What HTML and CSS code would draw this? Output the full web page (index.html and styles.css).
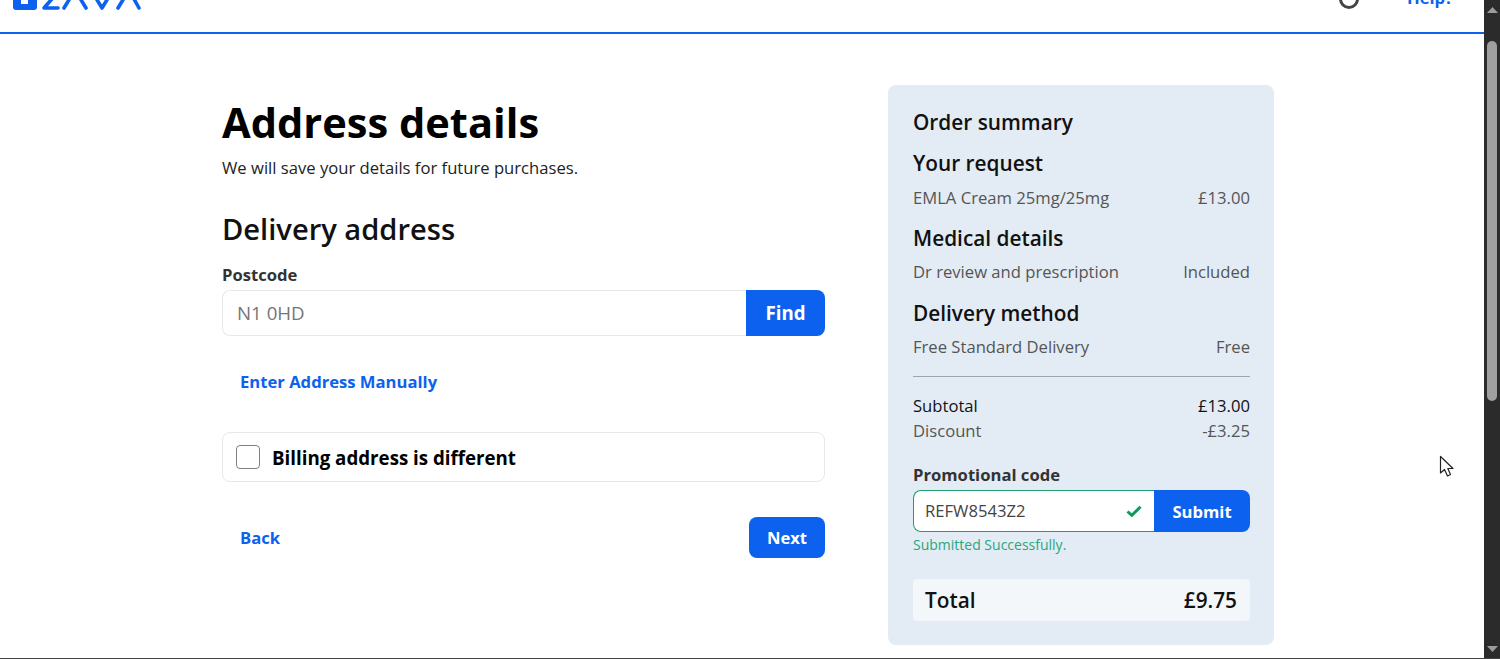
FILE: index.html
```html
<!DOCTYPE html>
<html lang="en">
<head>
<meta charset="utf-8">
<title>Address details</title>
<link rel="stylesheet" href="styles.css">
</head>
<body>
<div class="window">
  <div class="page">
    <header class="topbar">
      <svg class="logo" width="128" height="10" viewBox="0 0 128 10" aria-label="Zava">
        <path d="M0 -8H24V7Q24 10 21 10H3Q0 10 0 7Z" class="logo-fill"/>
        <rect x="8" y="-8" width="7" height="12" class="logo-gap"/>
        <path d="M45 8H31L45 -8M51 8L62 -10L73 8M78 -10L89 8L100 -10M105 8L116 -10L126 8" class="logo-stroke"/>
      </svg>
      <div class="topbar-right">
        <svg class="user" width="24" height="9" viewBox="0 0 24 9"><circle cx="12" cy="-1" r="8.5" class="user-ring"/></svg>
        <a class="help">Help?</a>
      </div>
    </header>
    <main class="content">
      <section class="form">
        <h1>Address details</h1>
        <p class="lead">We will save your details for future purchases.</p>
        <h2>Delivery address</h2>
        <label class="field-label">Postcode</label>
        <div class="postcode">
          <div class="postcode-input">N1 0HD</div>
          <button class="btn btn-find">Find</button>
        </div>
        <a class="link link-manual">Enter Address Manually</a>
        <div class="billing">
          <span class="checkbox"></span>
          <span>Billing address is different</span>
        </div>
        <div class="actions">
          <a class="link">Back</a>
          <button class="btn btn-next">Next</button>
        </div>
      </section>
      <aside class="summary">
        <div class="summary-title">Order summary</div>
        <div class="group-title">Your request</div>
        <div class="row"><span>EMLA Cream 25mg/25mg</span><span>£13.00</span></div>
        <div class="group-title">Medical details</div>
        <div class="row"><span>Dr review and prescription</span><span>Included</span></div>
        <div class="group-title">Delivery method</div>
        <div class="row"><span>Free Standard Delivery</span><span>Free</span></div>
        <hr class="rule">
        <div class="row row-sub dark"><span>Subtotal</span><span>£13.00</span></div>
        <div class="row row-sub"><span>Discount</span><span>-£3.25</span></div>
        <label class="promo-label">Promotional code</label>
        <div class="promo">
          <div class="promo-input">
            <span>REFW8543Z2</span>
            <svg width="16" height="12" viewBox="0 0 16 12"><path d="M1.5 6.5L5.8 10.3L14.5 1.8" class="tick"/></svg>
          </div>
          <button class="btn btn-submit">Submit</button>
        </div>
        <div class="promo-ok">Submitted Successfully.</div>
        <div class="total"><span>Total</span><span>£9.75</span></div>
      </aside>
    </main>
  </div>
  <div class="scrollbar">
    <svg class="arrow" width="11" height="6" viewBox="0 0 11 6"><path d="M5.5 0L11 6H0Z" class="arrow-fill"/></svg>
    <div class="thumb"></div>
    <svg class="arrow" width="11" height="6" viewBox="0 0 11 6"><path d="M0 0H11L5.5 6Z" class="arrow-fill"/></svg>
  </div>
  <svg class="cursor" width="16" height="24" viewBox="0 0 16 24"><path d="M1.5 1.5V18L5.5 14.5L8.5 21L11.5 19.5L8.8 13.5H14Z" class="cursor-shape"/></svg>
</div>
</body>
</html>
```
FILE: styles.css
```css
* { box-sizing: border-box; }
html, body { margin: 0; height: 659px; overflow: hidden; background: #fff; }
body { font-family: "Open Sans", sans-serif; color: #333; }
.window { position: relative; display: flex; height: 659px; border-bottom: 1px solid #444; }
.page { flex: 1; min-width: 0; }
.topbar { height: 34px; border-bottom: 2px solid #0c62ee; display: flex; justify-content: space-between; align-items: flex-end; overflow: hidden; padding: 0 31px 22px 13px; }
.logo { display: block; flex: none; }
.logo-fill { fill: #0c62ee; }
.logo-gap { fill: #fff; }
.logo-stroke { fill: none; stroke: #0c62ee; stroke-width: 3.6; stroke-linecap: round; stroke-linejoin: round; }
.topbar-right { display: flex; align-items: flex-end; gap: 46px; padding-bottom: 1px; }
.user { display: block; }
.user-ring { fill: none; stroke: #444; stroke-width: 3; }
.help { font-size: 16.64px; font-weight: 700; line-height: 22px; color: #0c62ee; height: 9px; display: flex; align-items: flex-end; }
.content { display: flex; align-items: flex-start; gap: 63px; padding: 51px 0 0 222px; }
.form { width: 603px; flex: none; padding-top: 11px; }
h1 { margin: 0; font-size: 41.6px; line-height: 52px; font-weight: 700; color: #000; }
.lead { margin: 9px 0 0; font-size: 16.64px; line-height: 22px; color: #222; }
h2 { margin: 31px 0 0; font-size: 29.12px; line-height: 38px; font-weight: 600; color: #111; }
.field-label { display: block; margin-top: 16px; font-size: 16.64px; font-weight: 700; line-height: 22px; color: #333; }
.postcode { display: flex; height: 46px; margin-top: 4px; }
.postcode-input { flex: 1; border: 1px solid #e6e8ea; border-right: 0; border-radius: 8px 0 0 8px; padding-left: 14px; font-size: 18.72px; line-height: 44px; color: #767676; }
.btn { border: 0; background: #0c62ee; color: #fff; font-family: inherit; font-weight: 700; padding: 0; }
.btn-find { width: 79px; font-size: 18.72px; border-radius: 0 8px 8px 0; padding-bottom: 1px; }
.link { font-size: 16.64px; font-weight: 700; line-height: 22px; color: #0c62ee; padding-left: 18px; }
.link-manual { display: block; margin-top: 35px; }
.billing { display: flex; align-items: center; gap: 12px; height: 50px; margin-top: 39px; padding-left: 13px; border: 1px solid #e6e8ea; border-radius: 8px; font-size: 18.72px; font-weight: 700; color: #000; }
.checkbox { width: 24px; height: 24px; border: 1px solid #808080; border-radius: 4px; background: #fff; }
.actions { display: flex; align-items: center; justify-content: space-between; margin-top: 35px; }
.btn-next { width: 76px; height: 41px; font-size: 16.64px; border-radius: 8px; padding-bottom: 1px; }
.summary { width: 386px; height: 560px; flex: none; padding: 24px 24px 25px 25px; background: #e3ecf4; border-radius: 8px; font-size: 16.64px; color: #555; }
.summary-title { font-size: 20.8px; font-weight: 600; line-height: 26px; color: #111; }
.group-title { margin-top: 14.4px; font-size: 20.8px; font-weight: 600; line-height: 28px; color: #111; }
.row { display: flex; justify-content: space-between; margin-top: 9.4px; line-height: 22px; }
.row + .group-title { margin-top: 15.3px; }
.rule { margin: 18px 0 0; border: 0; border-top: 1px solid #9aa5ad; }
.row-sub { margin-top: 3px; line-height: 22px; }
.rule + .row-sub { margin-top: 18px; }
.dark { color: #111; }
.promo-label { display: block; margin-top: 21.6px; font-weight: 700; line-height: 22px; color: #333; }
.promo { display: flex; height: 42px; margin-top: 4px; }
.promo-input { flex: 1; display: flex; align-items: center; justify-content: space-between; padding: 0 12px 0 11px; background: #fff; border: 1.5px solid #1d9d70; border-right: 0; border-radius: 8px 0 0 8px; color: #444; }
.tick { fill: none; stroke: #0d9a5e; stroke-width: 3; }
.btn-submit { width: 96px; font-size: 16.64px; border-radius: 0 8px 8px 0; padding-top: 1px; }
.promo-ok { margin-top: 4px; font-size: 14px; line-height: 18px; color: #2ba57c; }
.total { display: flex; justify-content: space-between; align-items: center; height: 42px; margin-top: 25px; padding: 0 13px 0 12px; background: #f3f7fa; border-radius: 4px; font-size: 20.8px; font-weight: 600; color: #111; }
.scrollbar { width: 16px; flex: none; background: #2b2b2b; display: flex; flex-direction: column; align-items: center; padding: 7px 0 6px; }
.arrow { display: block; flex: none; }
.arrow + .thumb { margin-top: 28px; }
.arrow-fill { fill: #9b9b9b; }
.thumb { width: 10px; height: 360px; margin-bottom: auto; border-radius: 5px; background: #9f9f9f; }
.cursor { position: absolute; left: 1439px; top: 455px; }
.cursor-shape { fill: #fff; stroke: #222; stroke-width: 1.2; stroke-linejoin: round; }
```
